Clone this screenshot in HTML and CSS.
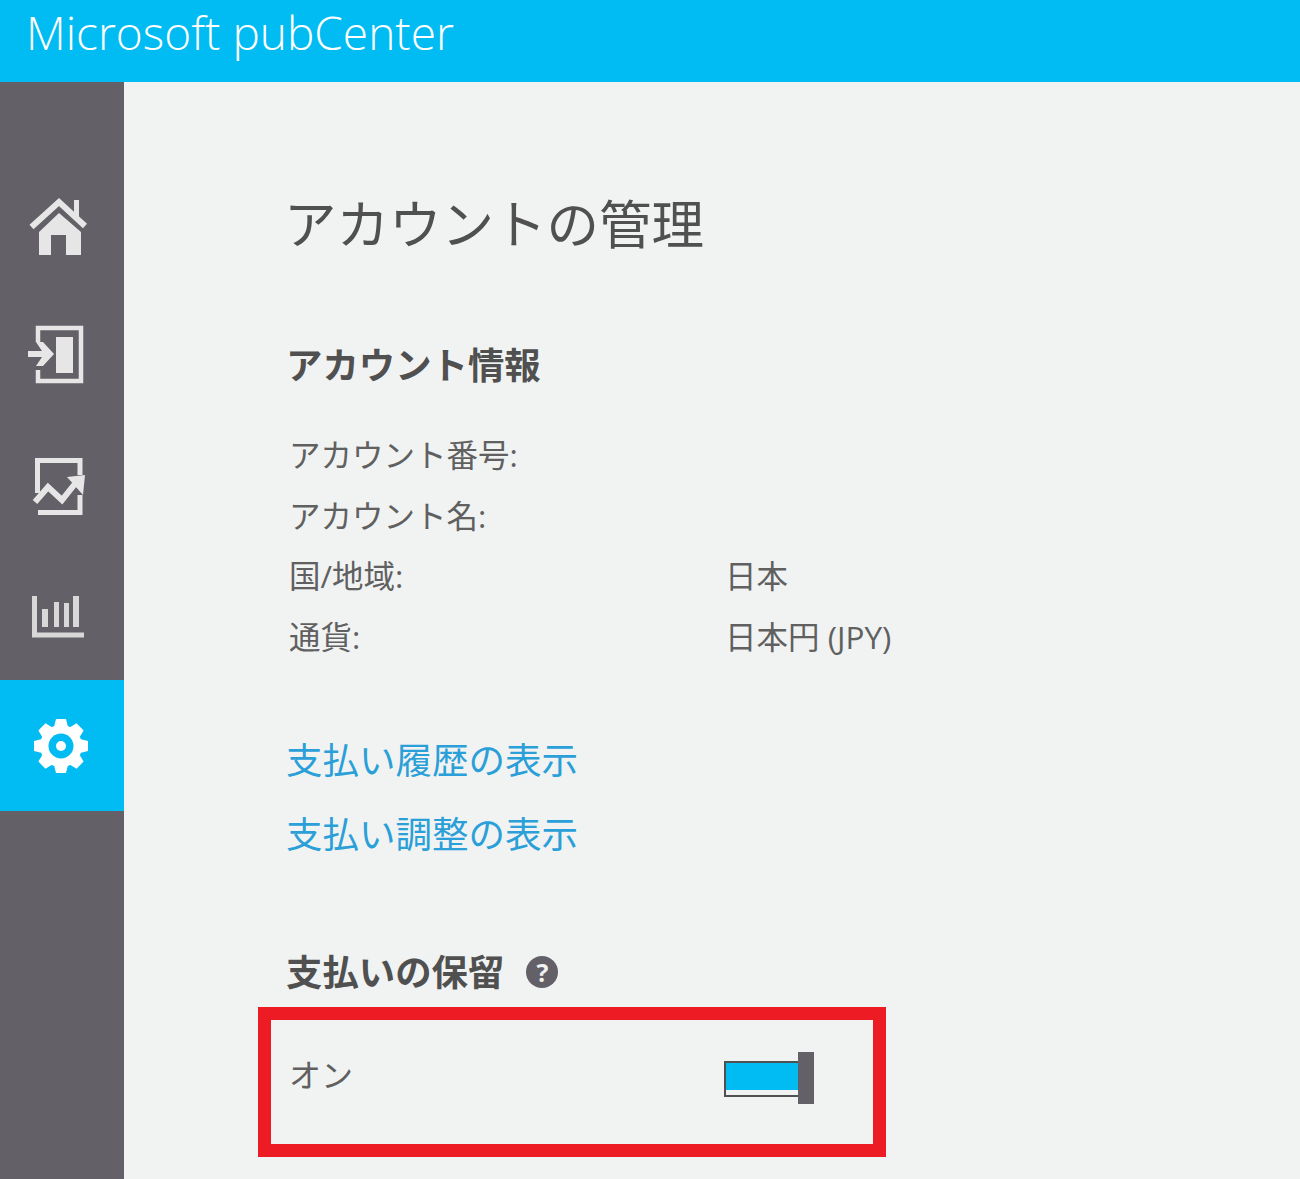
FILE: index.html
```html
<!DOCTYPE html>
<html lang="ja">
<head>
<meta charset="utf-8">
<title>Microsoft pubCenter</title>
<link rel="stylesheet" href="styles.css">
</head>
<body>
<header class="topbar">Microsoft pubCenter</header>
<div class="shell">
  <nav class="rail">
    <a class="rail-item">
      <svg class="icon" viewBox="-1 -2 60 60"><path d="M3.5 30 31 5l26 24" fill="none" stroke="#e6e6e6" stroke-width="6"/><path d="M46 3h5v19l-5-4zM11 35 31 16l22 19v24H38V38H23v21H11z" fill="#e6e6e6"/></svg>
    </a>
    <a class="rail-item">
      <svg class="icon" viewBox="-1 0 60 60"><path d="M10 17V3h43v53H10V45" fill="none" stroke="#e6e6e6" stroke-width="4.5"/><path d="M28 12h17v36H28z" fill="#e6e6e6"/><path d="M0 26h14l-6-9h7l11 12-11 12H8l6-9H0z" fill="#e6e6e6"/></svg>
    </a>
    <a class="rail-item">
      <svg class="icon" viewBox="0 -2 60 60"><path d="M10.5 36V3.5H53V18M53 38v17.5H11" fill="none" stroke="#e6e6e6" stroke-width="5"/><path d="M8 45 21 30l14 13 16-20" fill="none" stroke="#e6e6e6" stroke-width="6"/><path d="M40 20l18-2-2 20z" fill="#e6e6e6"/></svg>
    </a>
    <a class="rail-item">
      <svg class="icon" viewBox="1 0 60 60"><path d="M8.5 11v39H58" fill="none" stroke="#d8d8d8" stroke-width="5"/><path d="M16 24h6v18h-6zM28 17h5v25h-5zM38 18h5v24h-5zM47 11h6v31h-6z" fill="#d8d8d8"/></svg>
    </a>
    <a class="rail-item is-active">
      <svg class="icon" viewBox="0 0 60 60"><g fill="#fff"><circle cx="31" cy="30" r="21"/><path d="M26 3h10l3 12H23z"/><path d="M26 3h10l3 12H23z" transform="rotate(45 31 30)"/><path d="M26 3h10l3 12H23z" transform="rotate(90 31 30)"/><path d="M26 3h10l3 12H23z" transform="rotate(135 31 30)"/><path d="M26 3h10l3 12H23z" transform="rotate(180 31 30)"/><path d="M26 3h10l3 12H23z" transform="rotate(225 31 30)"/><path d="M26 3h10l3 12H23z" transform="rotate(270 31 30)"/><path d="M26 3h10l3 12H23z" transform="rotate(315 31 30)"/></g><circle cx="31" cy="30" r="12.5" fill="#00bcf2"/><circle cx="31" cy="30" r="5" fill="#fff"/></svg>
    </a>
  </nav>
  <main class="content">
    <h1 class="page-title">アカウントの管理</h1>
    <h2 class="section-title">アカウント情報</h2>
    <dl class="info">
      <dt>アカウント番号:</dt><dd></dd>
      <dt>アカウント名:</dt><dd></dd>
      <dt>国/地域:</dt><dd>日本</dd>
      <dt>通貨:</dt><dd>日本円 (JPY)</dd>
    </dl>
    <div class="links">
      <a class="link">支払い履歴の表示</a>
      <a class="link">支払い調整の表示</a>
    </div>
    <h2 class="section-title hold-title">支払いの保留 <span class="help">?</span></h2>
    <div class="hold-box">
      <span class="hold-label">オン</span>
      <span class="toggle"><span class="toggle-thumb"></span></span>
    </div>
  </main>
</div>
</body>
</html>
```
FILE: styles.css
```css
* { box-sizing: border-box; }
html, body { margin: 0; height: 100%; }
body {
  height: 1179px;
  overflow: hidden;
  background: #f1f3f3;
  color: #505050;
  font-family: "Open Sans", "Noto Sans CJK JP", sans-serif;
  display: flex;
  flex-direction: column;
}
.topbar {
  height: 82px;
  flex: none;
  background: #00bcf2;
  color: #fff;
  font-size: 46px;
  line-height: 64px;
  padding-left: 26px;
  font-family: "Open Sans", sans-serif;
  font-weight: 300;
}
.shell { flex: 1; display: flex; min-height: 0; }
.rail {
  width: 124px;
  flex: none;
  background: #636167;
  padding-top: 78px;
  display: flex;
  flex-direction: column;
}
.rail-item { height: 130px; display: flex; align-items: center; padding-left: 27px; }
.rail-item.is-active { background: #00bcf2; height: 131px; padding-left: 30px; }
.icon { width: 60px; height: 60px; display: block; }
.content { flex: 1; padding: 110px 0 0 164px; }
.page-title {
  margin: 0 0 0 -4px;
  font-size: 52.5px;
  line-height: 64px;
  font-weight: 400;
  color: #505050;
}
.section-title {
  margin: 85px 0 0 -2px;
  font-size: 36.4px;
  line-height: 48px;
  font-weight: 700;
  color: #505050;
}
.info {
  margin: 36px 0 0 1px;
  display: grid;
  grid-template-columns: 436px 1fr;
  grid-auto-rows: 60.7px;
  font-size: 31.5px;
  line-height: 60.7px;
  color: #606060;
}
.info dt, .info dd { margin: 0; font-weight: 400; }
.links { margin: 67px 0 0 -2px; display: flex; flex-direction: column; gap: 24px; }
.link { font-size: 36.5px; line-height: 50px; color: #2a9fd8; }
.hold-title { margin-top: 89px; display: flex; align-items: center; gap: 22px; }
.help {
  width: 32px; height: 32px; border-radius: 50%;
  background: #636167; color: #f1f3f3;
  font-size: 25px; line-height: 32px; text-align: center; font-weight: 700;
}
.hold-box {
  margin: 11px 0 0 -30px;
  width: 628px;
  height: 150px;
  border: 13px solid #ed1c24;
  display: flex;
  align-items: center;
  padding: 0 0 5px 18px;
}
.hold-label { width: 435px; font-size: 32px; line-height: 40px; margin-bottom: 8px; color: #606060; }
.toggle {
  position: relative;
  width: 82px; height: 36px;
  border: 2px solid #505050;
  background: #00bcf2;
  box-shadow: inset 0 -5px 0 #f1f3f3;
}
.toggle-thumb {
  position: absolute;
  right: -10px; top: -11px;
  width: 16px; height: 52px;
  background: #636167;
}
```
